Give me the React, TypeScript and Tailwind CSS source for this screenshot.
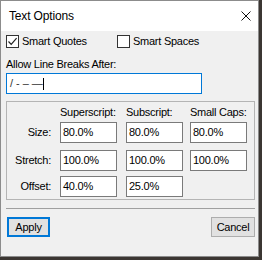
import { useState } from "react";

const cell =
  "w-[57px] h-[21px] border border-[#7a7a7a] bg-white pl-[2px] flex items-center";

function Checkbox({ checked, label }: { checked: boolean; label: string }) {
  return (
    <div className="flex items-center gap-[3px]">
      <div className="w-[13px] h-[13px] border border-[#333333] bg-white flex items-center justify-center">
        {checked && (
          <svg width="11" height="11" viewBox="0 0 11 11">
            <path d="M1.5 5.5 L4.2 8.3 L9.6 2.2" fill="none" stroke="#222" strokeWidth="1.2" />
          </svg>
        )}
      </div>
      <span>{label}</span>
    </div>
  );
}

export default function App() {
  const [rows] = useState([
    { label: "Size:", values: ["80.0%", "80.0%", "80.0%"], gap: "mt-[3px]" },
    { label: "Stretch:", values: ["100.0%", "100.0%", "100.0%"], gap: "mt-[7px]" },
    { label: "Offset:", values: ["40.0%", "25.0%"], gap: "mt-[5px]" },
  ]);

  return (
    <div className="w-[262px] h-[260px] bg-[#3b3632] font-['Liberation_Sans',Arial,sans-serif] text-[11px] leading-[13px] tracking-[-0.25px] text-black">
      <div className="w-[259px] h-[257px] border border-[#8c8c8c] bg-[#f0f0f0] flex flex-col">
        {/* title bar */}
        <div className="h-[30px] bg-white flex items-center justify-between pl-[8px] pr-[7px]">
          <span className="text-[12px] tracking-[-0.15px]">Text Options</span>
          <svg width="10" height="10" viewBox="0 0 10 10">
            <path d="M0.5 0.5 L9.5 9.5 M9.5 0.5 L0.5 9.5" stroke="#111" strokeWidth="1" />
          </svg>
        </div>

        <div className="pl-[5px] flex flex-col">
          <div className="flex items-center mt-[4px] h-[13px]">
            <div className="w-[111px]">
              <Checkbox checked label="Smart Quotes" />
            </div>
            <Checkbox checked={false} label="Smart Spaces" />
          </div>

          <div className="mt-[10px]">Allow Line Breaks After:</div>
          <div className="mt-[2px] w-[196px] h-[21px] border border-[#0078d7] bg-white flex items-center pl-[3px]">
            <span className="tracking-[3px] text-[#333]">/-–—</span>
            <span className="w-px h-[12px] bg-black -ml-[3px]" />
          </div>

          {/* group box */}
          <div className="mt-[7px] w-[249px] h-[99px] border border-[#b4b4b4] flex flex-col pt-[4px]">
            <div className="grid grid-cols-[53px_66px_64px_57px]">
              <span />
              <span>Superscript:</span>
              <span>Subscript:</span>
              <span>Small Caps:</span>
            </div>
            {rows.map((r) => (
              <div key={r.label} className={`grid grid-cols-[53px_66px_64px_57px] items-center ${r.gap}`}>
                <span className="text-right pr-[9px]">{r.label}</span>
                {r.values.map((v, i) => (
                  <div key={i} className={cell}>
                    {v}
                  </div>
                ))}
              </div>
            ))}
          </div>

          <div className="mt-[8px] w-[249px] h-px bg-[#a0a0a0]" />

          <div className="mt-[8px] w-[249px] flex justify-between">
            <button className="ml-[1px] w-[43px] h-[20px] border-2 border-[#0078d7] bg-[#e1e1e1] flex items-center justify-center">
              Apply
            </button>
            <button className="w-[44px] h-[20px] border border-[#adadad] bg-[#e1e1e1] flex items-center justify-center">
              Cancel
            </button>
          </div>
        </div>
      </div>
    </div>
  );
}
